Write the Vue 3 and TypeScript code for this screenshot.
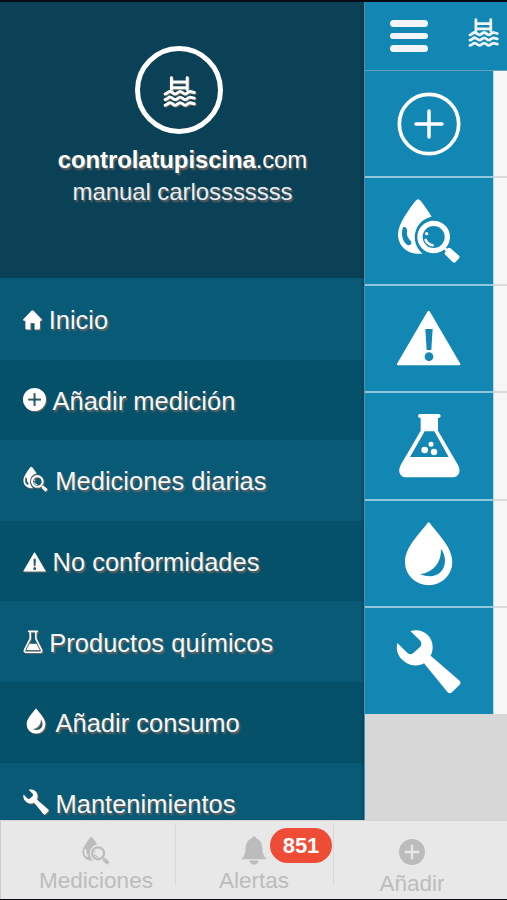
<script setup lang="ts">
import { defineComponent, h } from 'vue'

type IconName = 'home' | 'plus' | 'ring' | 'search' | 'warning' | 'flask' | 'beaker' | 'drop' | 'wrench' | 'pool' | 'bell'

interface Glyph {
  box: string
  body: [string, Record<string, string | number>][]
}

const fill = (d: string): [string, Record<string, string>] => ['path', { d, fill: 'currentColor', 'fill-rule': 'evenodd' }]
const line = (d: string, w: number): [string, Record<string, string | number>] => [
  'path',
  { d, fill: 'none', stroke: 'currentColor', 'stroke-width': w, 'stroke-linecap': 'round', 'stroke-linejoin': 'round' },
]
const dot = (cx: number, cy: number, r: number): [string, Record<string, string | number>] => [
  'circle',
  { cx, cy, r, fill: 'currentColor' },
]

const glyphs: Record<IconName, Glyph> = {
  home: {
    box: '0 0 56 58',
    body: [fill('M25 2Q28 -1 31 2L55 27Q58 31 52 31H50V53Q50 57 46 57H34V38H22V57H11Q7 57 7 53V31H4Q-2 31 1 27Z')],
  },
  plus: {
    box: '0 0 68 68',
    body: [fill('M34 0A34 34 0 1 1 34 68A34 34 0 1 1 34 0ZM31 15V31H15V37H31V53H37V37H53V31H37V15Z')],
  },
  ring: {
    box: '110 274 192 192',
    body: [
      ['circle', { cx: 206, cy: 370, r: 89, fill: 'none', stroke: 'currentColor', 'stroke-width': 11 }],
      line('M206 331V409M167 370H245', 10.5),
    ],
  },
  search: {
    box: '110 54 192 196',
    body: [
      fill('M166 62Q173 53 181 62C193 78 206 96 214 110A63 63 0 0 0 187 221C146 226 113 202 113 163C113 132 145 89 166 62ZM128 142C134 139 141 143 140 154C138 168 144 176 151 183C157 191 149 199 141 195C124 184 122 158 128 142Z'),
      ['circle', { cx: 220, cy: 171, r: 41, fill: 'none', stroke: 'currentColor', 'stroke-width': 16 }],
      line('M196 180Q202 193 217 196', 8),
      dot(199, 161, 5),
      line('M251 203L262 213', 8),
      fill('M262 205Q266 201 271 205L296 227Q300 231 296 235L286 246Q282 250 277 246L255 224Q251 220 255 215Z'),
    ],
  },
  warning: {
    box: '108 390 196 168',
    body: [
      fill('M203 394Q206 390 209 394L301 551Q303 556 298 556H114Q109 556 111 551ZM196 447L200 510H214L218 447ZM207 517A13 13 0 1 0 207 543A13 13 0 1 0 207 517Z'),
    ],
  },
  flask: {
    box: '112 84 188 196',
    body: [
      fill('M177 87H235Q240 88 240 93T234 99H232V137L292 240C302 260 294 277 276 277H136C118 277 110 260 120 240L180 137V99H178Q172 98 172 93T177 87ZM192 139L148 216H264L221 139Z'),
      dot(192, 195, 10),
      dot(211, 178, 7.5),
      dot(220, 201, 9.5),
    ],
  },
  beaker: {
    box: '68 59 61 71',
    body: [
      line('M85 63H112M90 64V85L73 119Q70 127 78 127H119Q127 127 124 119L107 85V64', 5),
      fill('M88 101H109L119 120H78Z'),
    ],
  },
  drop: {
    box: '132 407 148 196',
    body: [
      fill('M202 414Q206 408 210 414C232 445 277 485 277 530A71 70 0 0 1 135 530C135 485 180 445 202 414ZM243 490C245 530 222 560 180 567C226 584 255 560 255 526Q255 507 243 490Z'),
    ],
  },
  wrench: {
    box: '108 84 196 196',
    body: [
      fill('M151 90C186 80 219 103 218 140Q218 153 212 164L299 239Q304 245 299 251L276 274Q269 280 263 274L192 187C179 195 155 197 136 184C113 168 107 148 112 126L140 154Q150 164 160 156L181 137Q187 128 181 119Z'),
    ],
  },
  pool: {
    box: '325 51 94 94',
    body: [
      line('M349 59V93M394 59V93M349 71H394M349 87H394', 8.5),
      line('M331 105C339 104 340 97 346 98S354 105 360 105S368 98 374 98S382 105 388 105S396 98 402 98T414 101M331 121C339 120 340 113 346 114S354 121 360 121S368 114 374 114S382 121 388 121S396 114 402 114T414 117M331 137C339 136 340 129 346 130S354 137 360 137S368 130 374 130S382 137 388 137S396 130 402 130T414 133', 8.5),
    ],
  },
  bell: {
    box: '0 0 80 86',
    body: [
      fill('M40 1Q45 1 46 7C62 13 64 25 65 39C66 53 69 60 79 69H1C11 60 14 53 15 39C16 25 18 13 34 7Q35 1 40 1ZM26 73H54Q51 85 40 85T26 73Z'),
    ],
  },
}

const AppIcon = defineComponent({
  props: { name: { type: String, required: true } },
  setup(props) {
    return () => {
      const glyph = glyphs[props.name as IconName]
      return h('svg', { viewBox: glyph.box, 'aria-hidden': 'true' }, glyph.body.map(([tag, attrs]) => h(tag, attrs)))
    }
  },
})

const menu: { icon: IconName; label: string }[] = [
  { icon: 'home', label: 'Inicio' },
  { icon: 'plus', label: 'Añadir medición' },
  { icon: 'search', label: 'Mediciones diarias' },
  { icon: 'warning', label: 'No conformidades' },
  { icon: 'beaker', label: 'Productos químicos' },
  { icon: 'drop', label: 'Añadir consumo' },
  { icon: 'wrench', label: 'Mantenimientos' },
]

const tiles: IconName[] = ['ring', 'search', 'warning', 'flask', 'drop', 'wrench']
</script>

<template>
  <div class="screen">
    <div class="main">
      <aside class="drawer">
        <header class="profile">
          <div class="logo"><AppIcon name="pool" class="logo-icon" /></div>
          <div class="brand"><b>controlatupiscina</b>.com</div>
          <div class="user">manual carlosssssss</div>
        </header>
        <nav class="menu">
          <a v-for="item in menu" :key="item.label" class="row">
            <span class="slot" :class="`slot-${item.icon}`"><AppIcon :name="item.icon" class="row-icon" /></span>
            <span class="label">{{ item.label }}</span>
          </a>
        </nav>
      </aside>
      <section class="page">
        <div class="topbar">
          <div class="burger"><i /><i /><i /></div>
          <AppIcon name="pool" class="top-pool" />
        </div>
        <div v-for="tile in tiles" :key="tile" class="tile-row">
          <div class="tile"><AppIcon :name="tile" class="tile-icon" :class="`tile-${tile}`" /></div>
        </div>
      </section>
    </div>
    <footer class="tabs">
      <div class="tab tab-search"><AppIcon name="search" class="tab-icon" /><span>Mediciones</span></div>
      <div class="tab tab-bell"><AppIcon name="bell" class="tab-icon" /><span>Alertas</span><b class="badge">851</b></div>
      <div class="tab tab-plus"><AppIcon name="plus" class="tab-icon" /><span>Añadir</span></div>
    </footer>
  </div>
</template>

<style>
body {
  background: #0a0a0c;
  overflow: hidden;
}
</style>

<style scoped>
.screen {
  box-sizing: border-box;
  width: 507px;
  height: 900px;
  padding-top: 2px;
  display: flex;
  flex-direction: column;
  background: #050b10;
  font-family: "Liberation Sans", Arial, sans-serif;
  color: #fff;
  overflow: hidden;
}
svg {
  display: block;
  flex: none;
}
.main {
  height: 818px;
  display: flex;
  overflow: hidden;
}
.drawer {
  width: 364px;
  flex: none;
  background: #085a77;
}
.profile {
  box-sizing: border-box;
  height: 276px;
  padding-top: 44px;
  display: flex;
  flex-direction: column;
  align-items: center;
  background: #0a4157;
  box-shadow: inset -3px 0 3px -2px rgba(0, 30, 45, 0.5);
}
.logo {
  box-sizing: border-box;
  width: 88px;
  height: 88px;
  margin-right: 6px;
  border: 5px solid #fff;
  border-radius: 50%;
  display: flex;
  align-items: center;
  justify-content: center;
}
.logo-icon {
  width: 33px;
  height: 33px;
  margin-top: 2px;
  filter: drop-shadow(1.5px 1.5px 0.7px #655f5b);
}
.brand,
.user,
.label {
  text-shadow: 1.5px 1.5px 1.5px #6d6662;
  white-space: nowrap;
}
.brand {
  margin: 10px 0 0 1px;
  font-size: 24px;
  line-height: 32px;
  letter-spacing: -0.13px;
}
.user {
  margin-left: 1px;
  font-size: 24px;
  line-height: 31px;
  color: #e8eef1;
  letter-spacing: -0.07px;
}
.row {
  box-sizing: border-box;
  height: 80.6px;
  padding: 2px 0 0 23px;
  display: flex;
  align-items: center;
  gap: 5px;
  box-shadow: inset -3px 0 3px -2px rgba(0, 30, 45, 0.4);
}
.row:first-child {
  height: 81.6px;
}
.row:nth-child(even) {
  background: #06516a;
}
.slot {
  flex: none;
  display: flex;
  filter: drop-shadow(1.5px 1.5px 0.7px #6d6662);
}
.row-icon {
  width: 23px;
  height: 23px;
}
.slot-home { width: 20.7px; }
.slot-home .row-icon { width: 19px; height: 20px; }
.slot-plus { width: 24.5px; }
.slot-plus .row-icon { margin-top: -2px; }
.slot-search { width: 27.3px; }
.slot-search .row-icon { width: 25px; height: 26px; margin-top: -5px; }
.slot-warning { width: 24.5px; }
.slot-warning .row-icon { height: 20px; }
.slot-beaker { width: 21.3px; }
.slot-beaker .row-icon { width: 20px; height: 23.3px; margin-top: -2px; }
.slot-drop { width: 27.5px; }
.slot-drop .row-icon { width: 20px; height: 26px; margin: -5px 0 0 3px; }
.slot-wrench { width: 27.5px; }
.slot-wrench .row-icon { width: 26px; height: 26px; margin-top: -4px; }
.label {
  font-size: 25.5px;
  line-height: 30px;
  color: #f4f7f8;
}
.page {
  flex: 1;
  border-left: 1px solid #4c92ab;
  background: #d7d7d7;
}
.topbar {
  box-sizing: border-box;
  height: 69px;
  padding: 15px 8px 0 25px;
  display: flex;
  justify-content: space-between;
  background: #1387b3;
  border-bottom: 1px solid #62a4b8;
}
.burger {
  width: 38px;
  padding-top: 3px;
  display: flex;
  flex-direction: column;
  gap: 6px;
}
.burger i {
  height: 6.7px;
  border-radius: 4px;
  background: #f4f5fa;
}
.top-pool {
  width: 31px;
  height: 31px;
  color: #eef5f9;
}
.tile-row {
  box-sizing: border-box;
  height: 107.4px;
  background: linear-gradient(#dadada, #dadada) bottom / 100% 2px no-repeat #f6f6f6;
}
.tile-row:last-child {
  height: 106.4px;
  background: #f6f6f6;
}
.tile {
  box-sizing: border-box;
  width: 129px;
  height: 100%;
  display: flex;
  align-items: center;
  justify-content: center;
  background: #1387b3;
  border-right: 1px solid #b9dae6;
  border-bottom: 2px solid #8fc6dc;
}
.tile-row:last-child .tile {
  border-bottom: 0;
}
.tile-icon {
  width: 64px;
  height: 64px;
}
.tile-search { height: 65.3px; }
.tile-warning { width: 65.3px; height: 56px; }
.tile-flask { width: 62.7px; height: 65.3px; }
.tile-drop { width: 49.3px; height: 65.3px; }
.tile-wrench { width: 65.3px; height: 65.3px; }
.tabs {
  height: 79px;
  box-sizing: border-box;
  padding: 0 17px;
  display: flex;
  background: #e8e8e8;
  border-top: 1px solid #d2d4d5;
  box-shadow: inset 1px 0 #c6d0d6;
  color: #bcbcbc;
}
.tab {
  position: relative;
  width: 158px;
  flex: none;
  display: flex;
  flex-direction: column;
  align-items: center;
  font-size: 22.5px;
  line-height: 26px;
}
.tab + .tab::before {
  content: "";
  position: absolute;
  left: 0;
  top: 2px;
  width: 1px;
  height: 62px;
  background: #d9d9d9;
}
.tab-icon {
  width: 28px;
  height: 29px;
  margin: 15px 0 3px;
}
.tab-plus .tab-icon {
  width: 26px;
  height: 26px;
  margin: 18px 0 6px;
}
.badge {
  position: absolute;
  left: 95px;
  top: 7px;
  width: 62px;
  height: 35px;
  border-radius: 18px;
  background: #ee4c37;
  color: #fff;
  font-size: 22px;
  line-height: 36px;
  text-align: center;
}
</style>
